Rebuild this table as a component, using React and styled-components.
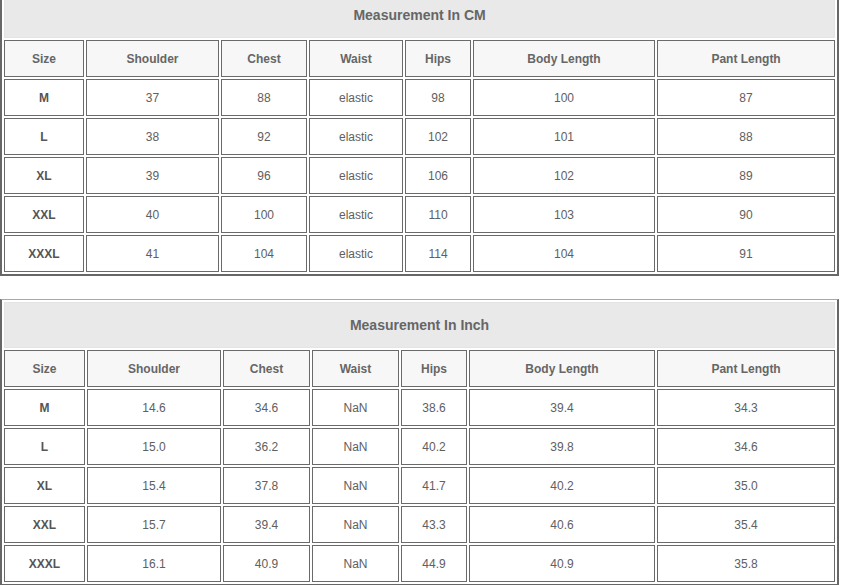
import React from "react";
import styled, { createGlobalStyle } from "styled-components";

const GlobalStyle = createGlobalStyle`
  html, body { margin: 0; padding: 0; background: #ffffff; }
  body { font-family: "Liberation Sans", Arial, sans-serif; overflow: hidden; }
`;

const Page = styled.div`
  display: flex;
  flex-direction: column;
  gap: 23px;
  width: 842px;
  margin-top: -11px;
`;

const Table = styled.table`
  width: 839px;
  table-layout: fixed;
  border-collapse: separate;
  border-spacing: 2px;
  border-style: solid;
  border-color: #a8a8a8 #676767 #676767 #676767;
  border-width: 1px 2px 2px 2px;
  background: #ffffff;
`;

const TitleCell = styled.th`
  height: 44px;
  padding: 0;
  background: #e9e9e9;
  border: 1px solid #e4e4e4;
  color: #666666;
  font-size: 14px;
  font-weight: bold;
  text-align: center;
  vertical-align: middle;
`;

const HeadCell = styled.th`
  height: 37px;
  box-sizing: border-box;
  padding: 0;
  background: #f7f7f7;
  border: 1px solid #6a6a6a;
  color: #666666;
  font-size: 12px;
  font-weight: bold;
  text-align: center;
  vertical-align: middle;
`;

const Cell = styled.td`
  height: 37px;
  box-sizing: border-box;
  padding: 0;
  background: #ffffff;
  border: 1px solid #6a6a6a;
  color: ${(p) => (p.$strong ? "#555555" : "#606060")};
  font-size: 12px;
  font-weight: ${(p) => (p.$strong ? "bold" : "normal")};
  text-align: center;
  vertical-align: middle;
`;

const headers = ["Size", "Shoulder", "Chest", "Waist", "Hips", "Body Length", "Pant Length"];

const cmRows = [
  ["M", "37", "88", "elastic", "98", "100", "87"],
  ["L", "38", "92", "elastic", "102", "101", "88"],
  ["XL", "39", "96", "elastic", "106", "102", "89"],
  ["XXL", "40", "100", "elastic", "110", "103", "90"],
  ["XXXL", "41", "104", "elastic", "114", "104", "91"],
];

const inchRows = [
  ["M", "14.6", "34.6", "NaN", "38.6", "39.4", "34.3"],
  ["L", "15.0", "36.2", "NaN", "40.2", "39.8", "34.6"],
  ["XL", "15.4", "37.8", "NaN", "41.7", "40.2", "35.0"],
  ["XXL", "15.7", "39.4", "NaN", "43.3", "40.6", "35.4"],
  ["XXXL", "16.1", "40.9", "NaN", "44.9", "40.9", "35.8"],
];

function SizeTable({ title, rows, widths }) {
  return (
    <Table>
      <colgroup>
        {widths.map((w, i) => (
          <col key={i} style={{ width: w }} />
        ))}
      </colgroup>
      <thead>
        <tr>
          <TitleCell colSpan={7}>{title}</TitleCell>
        </tr>
        <tr>
          {headers.map((h) => (
            <HeadCell key={h}>{h}</HeadCell>
          ))}
        </tr>
      </thead>
      <tbody>
        {rows.map((r) => (
          <tr key={r[0]}>
            {r.map((v, i) => (
              <Cell key={i} $strong={i === 0}>
                {v}
              </Cell>
            ))}
          </tr>
        ))}
      </tbody>
    </Table>
  );
}

export default function App() {
  return (
    <>
      <GlobalStyle />
      <Page>
        <SizeTable
          title="Measurement In CM"
          rows={cmRows}
          widths={[80, 133, 86, 94, 66, 182, 178]}
        />
        <SizeTable
          title="Measurement In Inch"
          rows={inchRows}
          widths={[81, 134, 87, 87, 66, 186, 178]}
        />
      </Page>
    </>
  );
}
